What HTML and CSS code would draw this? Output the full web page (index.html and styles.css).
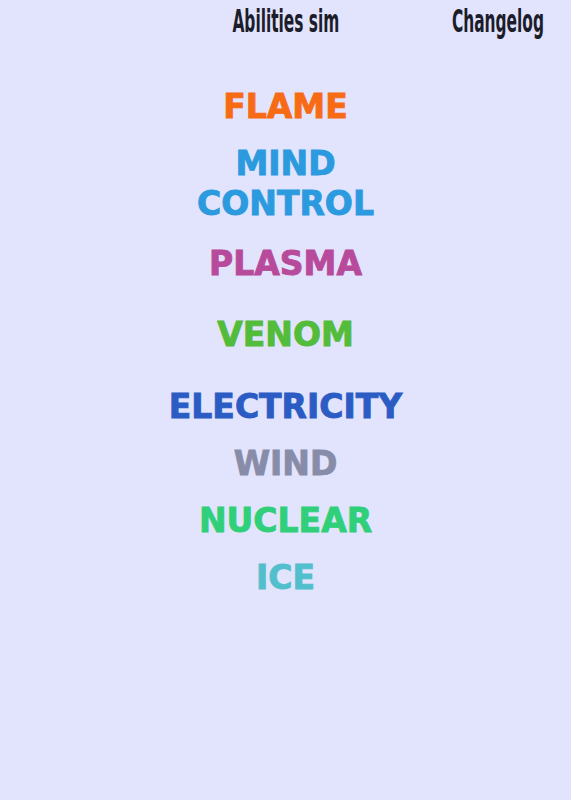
FILE: index.html
```html
<!DOCTYPE html>
<html>
<head>
<meta charset="utf-8">
<link rel="stylesheet" href="styles.css">
</head>
<body>
<header class="topbar">
  <span class="nav-spacer"></span>
  <a class="nav-link center">Abilities sim</a>
  <a class="nav-link right">Changelog</a>
</header>
<main class="abilities">
  <div class="ability flame">FLAME</div>
  <div class="ability mind">MIND<br>CONTROL</div>
  <div class="ability plasma">PLASMA</div>
  <div class="ability venom">VENOM</div>
  <div class="ability electricity">ELECTRICITY</div>
  <div class="ability wind">WIND</div>
  <div class="ability nuclear">NUCLEAR</div>
  <div class="ability ice">ICE</div>
</main>
</body>
</html>
```
FILE: styles.css
```css
html, body {
  margin: 0;
  padding: 0;
}
body {
  background: #e2e3fc;
  min-height: 800px;
  font-family: "DejaVu Sans", sans-serif;
}
.topbar {
  display: grid;
  grid-template-columns: minmax(0, 1fr) auto minmax(0, 1fr);
  align-items: center;
  height: 42px;
}
.nav-link {
  font-family: "Liberation Sans Narrow", "DejaVu Sans Condensed", sans-serif;
  font-weight: 700;
  font-size: 32px;
  line-height: 40px;
  color: #1c1d2b;
  white-space: nowrap;
}
.nav-link.center {
  transform: scaleX(0.535);
}
.nav-link.right {
  justify-self: end;
  margin-right: 27px;
  transform: scaleX(0.535);
  transform-origin: right center;
}
.abilities {
  display: flex;
  flex-direction: column;
  align-items: center;
  gap: 17px;
  padding-top: 45px;
}
.ability {
  font-weight: 700;
  font-size: 33px;
  line-height: 40px;
  text-align: center;
  -webkit-text-stroke: 0.9px currentColor;
}
.flame { color: #f76b15; }
.mind { color: #2b9ade; }
.plasma { color: #b84a9b; margin-top: 3px; }
.venom { color: #53bc3a; margin-top: 14px; }
.electricity { color: #2a5cc4; margin-top: 15px; }
.wind { color: #878ca8; }
.nuclear { color: #30d07a; }
.ice { color: #52bfcc; }
```
